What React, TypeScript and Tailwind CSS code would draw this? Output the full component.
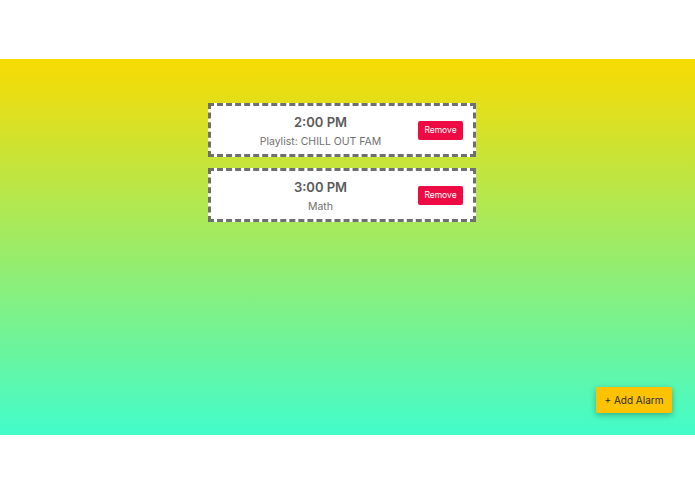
import React from "react";

const alarms = [
  { time: "2:00 PM", label: "Playlist: CHILL OUT FAM" },
  { time: "3:00 PM", label: "Math" },
];

export default function App() {
  return (
    <div className="w-[695px] h-[494px] bg-white pt-[59px]" style={{ fontFamily: "Inter, 'Liberation Sans', sans-serif" }}>
      <div className="relative h-[376px] bg-[linear-gradient(to_bottom,#f8db02,#42fccb)] pt-[44px]">
        <div className="ml-[208px] w-[268px] flex flex-col gap-[11px]">
          {alarms.map((a) => (
            <div
              key={a.time}
              className="h-[54px] bg-white border-[3px] border-dashed border-[#6f6f6f] flex items-center pl-[12px] pr-[10px]"
            >
              <div className="flex-1 flex flex-col items-center pt-[3px]">
                <div className="text-[13px] leading-[17px] font-semibold text-[#5a5a5a]">{a.time}</div>
                <div className="text-[10.5px] leading-[16px] mt-[3px] text-[#707070]">{a.label}</div>
              </div>
              <button className="w-[45px] h-[19px] bg-[#ee0a42] text-white text-[8.5px] rounded-[2px] flex items-center justify-center">
                Remove
              </button>
            </div>
          ))}
        </div>
        <button className="absolute right-[23px] bottom-[22px] w-[76px] h-[26px] bg-[#fdc300] text-[#2a2a2a] text-[10px] rounded-[2px] shadow-[0_2px_6px_rgba(0,0,0,0.3)] flex items-center justify-center">
          + Add Alarm
        </button>
      </div>
    </div>
  );
}
